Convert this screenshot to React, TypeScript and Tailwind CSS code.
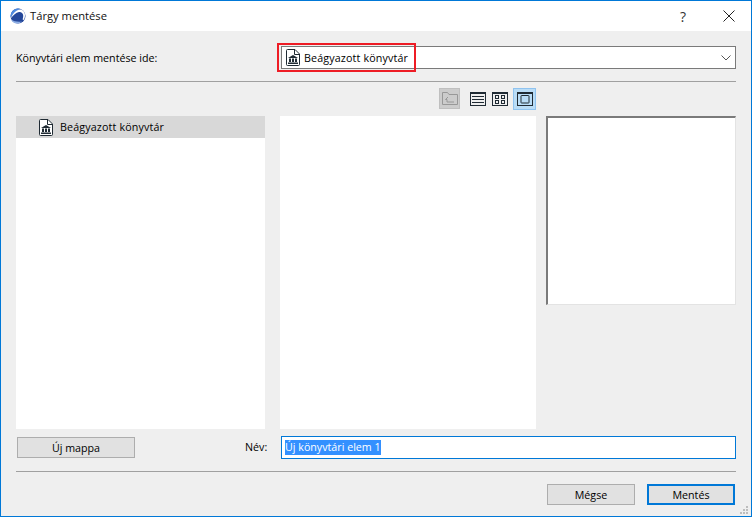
import React from "react";

const font = "font-['Open_Sans','Liberation_Sans',sans-serif]";

function LibraryIcon() {
    return (
        <svg width="14" height="17" viewBox="0 0 14 17" fill="none" className="shrink-0">
            <path d="M.5 1.500a1 1 0 0 1 1-1h7.500l4.500 4.500v10.500a1 1 0 0 1-1 1h-11a1 1 0 0 1-1-1z" fill="#fff" stroke="#1f2a33" />
            <path d="M8.500 .5v5h5" stroke="#1f2a33" />
            <path d="M7 6l5 3H2z" fill="#1f2a33" />
            <path d="M3 9.500h2v3.500H3zM6 9.500h2v3.500H6zM9 9.500h2v3.500H9zM2 13.500h10V15H2z" fill="#1f2a33" />
        </svg>
    );
}

function AppLogo() {
    return (
        <svg width="16" height="16" viewBox="0 0 16 16" className="shrink-0">
            <circle cx="8" cy="8" r="7.500" fill="#24479a" />
            <path d="M.6 9.500C.2 4.500 3.500.5 8 .5c1.200 0 2.200.2 3 .7C7 1.500 3.500 5 .6 9.500z" fill="#4d8ae0" />
            <path d="M.6 10.500C3 5 6.500 1.500 10 1.500c3 0 5 2.500 5 5.500 0 2-.4 3.500-1 5l-1.400-.4c.6-2 .8-3.600.4-5C12.400 4.600 10.800 3.700 9 4.100 6 4.800 3.200 7.500.6 10.500z" fill="#fff" />
            <path d="M1 11.500c1 2.500 3.500 4 6 4 2 0 3.500-.7 5-2-4 .5-8 0-11-2z" fill="#8fb0e6" />
        </svg>
    );
}

function ParentFolderIcon() {
    return (
        <svg width="16" height="13" viewBox="0 0 16 13" fill="none">
            <path d="M.5 12.500V.5h5l1.500 2h8.500v10z" stroke="#989898" />
            <path d="M6 5L3.500 7.500H5v2.500h7" stroke="#989898" />
        </svg>
    );
}

function ListViewIcon() {
    return (
        <svg width="16" height="14" viewBox="0 0 16 14" fill="none">
            <rect x=".5" y=".5" width="15" height="13" stroke="#1f2a33" />
            <path d="M0 1h16" stroke="#1f2a33" strokeWidth="2" />
            <path d="M2 4.500h12M2 7.500h12M2 10.500h12" stroke="#1f2a33" />
        </svg>
    );
}

function GridViewIcon() {
    return (
        <svg width="16" height="14" viewBox="0 0 16 14" fill="none">
            <rect x=".5" y=".5" width="15" height="13" stroke="#1f2a33" />
            <path d="M0 1h16" stroke="#1f2a33" strokeWidth="2" />
            <rect x="3.500" y="3.500" width="3" height="3" stroke="#1f2a33" />
            <rect x="9.500" y="3.500" width="3" height="3" stroke="#1f2a33" />
            <rect x="3.500" y="8.500" width="3" height="3" stroke="#1f2a33" />
            <rect x="9.500" y="8.500" width="3" height="3" stroke="#1f2a33" />
        </svg>
    );
}

function PreviewViewIcon() {
    return (
        <svg width="16" height="14" viewBox="0 0 16 14" fill="none">
            <rect x=".5" y=".5" width="15" height="13" stroke="#1f2a33" />
            <path d="M0 1h16" stroke="#1f2a33" strokeWidth="2" />
            <rect x="4" y="3.500" width="8" height="7.500" rx=".5" stroke="#1f2a33" />
        </svg>
    );
}

function ResizeGrip() {
    const dots = ["col-start-3", "col-start-2", "col-start-3", "col-start-1", "col-start-2", "col-start-3"];
    return (
        <div className="absolute bottom-[2px] right-[3px] grid grid-cols-[2px_2px_2px] gap-px">
            {dots.map((c, i) => (
                <span key={i} className={`h-[2px] w-[2px] bg-[#bdbdbd] ${c}`} />
            ))}
        </div>
    );
}

export default function App() {
    return (
        <div className={`relative flex h-[517px] w-[752px] flex-col overflow-hidden border border-[#0078d7] bg-[#efefef] text-[10.7px] font-medium text-black ${font}`}>
            {/* Title bar */}
            <div className="flex h-[30px] shrink-0 items-center bg-white pl-[9px]">
                <AppLogo />
                <span className="ml-[4px] text-[11.2px] font-normal text-[#111]">Tárgy mentése</span>
                <span className="ml-auto mr-[37px] text-[14px] font-normal text-[#333]">?</span>
                <svg width="12" height="12" viewBox="0 0 12 12" className="mr-[16px]">
                    <path d="M.5.5l11 11M11.500.5l-11 11" stroke="#222" />
                </svg>
            </div>

            <div className="flex grow flex-col px-[15px]">
                {/* Target library */}
                <div className="mt-[15px] flex h-[23px] items-center">
                    <span className="w-[265px] pt-px">Könyvtári elem mentése ide:</span>
                    <div className="relative flex h-[23px] w-[455px] items-center border border-[#7a7a7a] bg-white pl-[4px]">
                        <LibraryIcon />
                        <span className="ml-[4px] pt-px tracking-[0.15px]">Beágyazott könyvtár</span>
                        <svg width="10" height="6" viewBox="0 0 10 6" fill="none" className="absolute right-[4px] top-[8px]">
                            <path d="M.5.5L5 5 9.500.5" stroke="#555" />
                        </svg>
                        <div className="absolute left-[-5px] top-[-4px] h-[29px] w-[139px] border-2 border-[#ee1c25]" />
                    </div>
                </div>

                <div className="mt-[12px] h-px w-[720px] bg-[#a0a0a0]" />

                {/* View toolbar */}
                <div className="mt-[5px] flex h-[23px] w-[520px] items-center justify-end">
                    <div className="mr-[10px] flex h-[21px] w-[21px] items-center justify-center border border-[#bfbfbf] bg-[#cccccc]">
                        <ParentFolderIcon />
                    </div>
                    <ListViewIcon />
                    <div className="ml-[6px]"><GridViewIcon /></div>
                    <div className="ml-[5px] flex h-[22px] w-[23px] items-center justify-center border border-[#8fc3f0] bg-[#b9dcf6]"><PreviewViewIcon /></div>
                </div>

                {/* Panels */}
                <div className="mt-[6px] flex h-[313px]">
                    <div className="w-[249px] bg-white">
                        <div className="flex h-[22px] items-center bg-[#d8d8d8] pl-[23px]">
                            <LibraryIcon />
                            <span className="ml-[7px] tracking-[0.15px]">Beágyazott könyvtár</span>
                        </div>
                    </div>
                    <div className="ml-[15px] w-[256px] bg-white" />
                    <div className="ml-[10px] h-[189px] w-[190px] border-2 border-b border-r border-l-[#7a7a7a] border-t-[#7a7a7a] border-b-[#e3e3e3] border-r-[#e3e3e3] bg-white" />
                </div>

                {/* Name row */}
                <div className="mt-[7px] flex h-[23px] items-center">
                    <button className="ml-px h-[21px] w-[118px] border border-[#adadad] bg-[#e1e1e1] pt-px">Új mappa</button>
                    <span className="ml-[110px] w-[36px]">Név:</span>
                    <div className="flex h-[23px] w-[455px] items-center border border-[#0078d7] bg-white pl-[3px]">
                        <span className="bg-[#3390ff] leading-[15px] text-white">Új könyvtári elem 1</span>
                    </div>
                </div>

                <div className="mt-[12px] h-px w-[720px] bg-[#a0a0a0]" />

                {/* Dialog buttons */}
                <div className="mt-[12px] flex w-[719px] justify-end gap-[12px]">
                    <button className="h-[21px] w-[88px] border border-[#adadad] bg-[#e1e1e1] pt-px">Mégse</button>
                    <button className="h-[21px] w-[88px] border-2 border-[#0078d7] bg-[#e1e1e1] pt-px">Mentés</button>
                </div>
            </div>

            <ResizeGrip />
        </div>
    );
}
